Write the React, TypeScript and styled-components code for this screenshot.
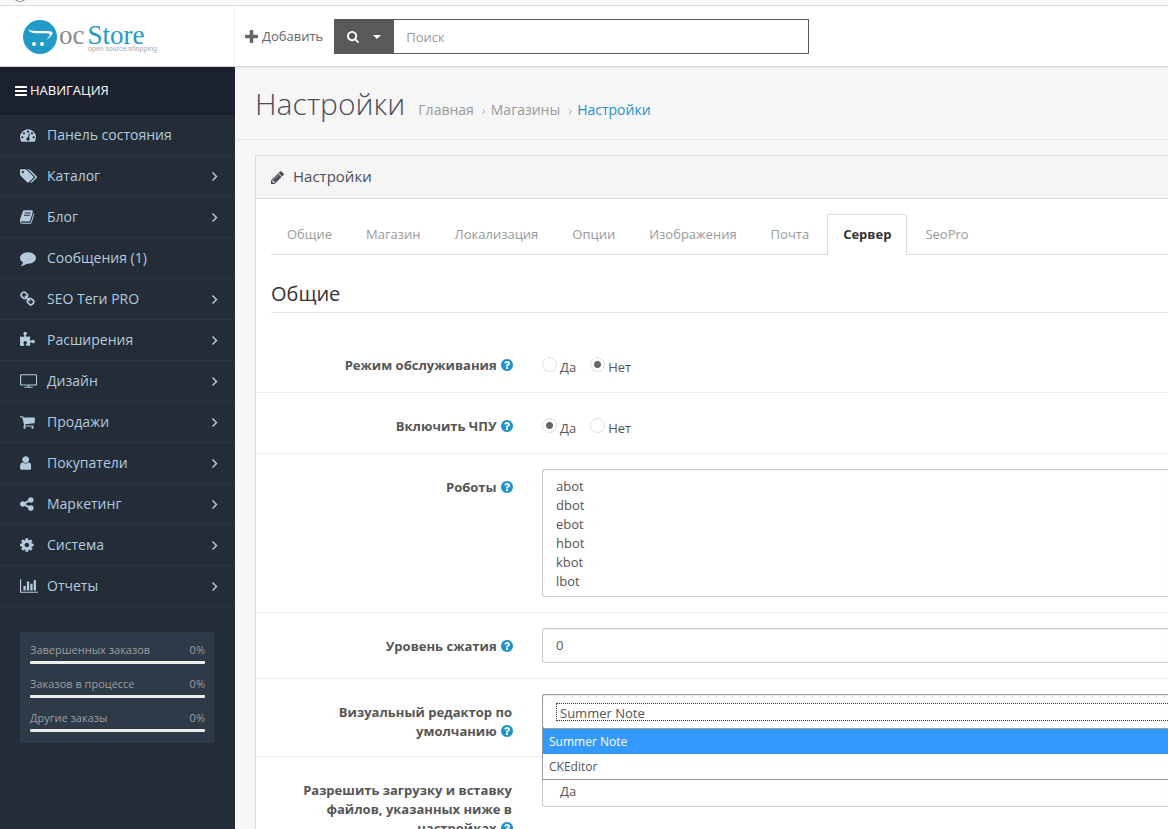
import React from "react";
import styled, { createGlobalStyle } from "styled-components";

const GlobalStyle = createGlobalStyle`
  *, *::before, *::after { box-sizing: border-box; }
  body {
    margin: 0;
    background: #f6f6f6;
    color: #555;
    font: 400 13px/19px "Open Sans", "Noto Sans", sans-serif;
  }
  a { color: inherit; text-decoration: none; }
  button, input, select, textarea { font: inherit; color: inherit; }
  ul, ol { list-style: none; margin: 0; padding: 0; }
  h1, h2, h3 { margin: 0; font-weight: 400; }
`;

/* ---------- icons ---------- */

type Glyph = { box: string; ratio: number; d: string };

const glyphs: Record<string, Glyph> = {
  bars: {
    box: "128 0 1536 1792",
    ratio: 0.857,
    d: "M1664 1344v128q0 26-19 45t-45 19h-1408q-26 0-45-19t-19-45v-128q0-26 19-45t45-19h1408q26 0 45 19t19 45zm0-512v128q0 26-19 45t-45 19h-1408q-26 0-45-19t-19-45v-128q0-26 19-45t45-19h1408q26 0 45 19t19 45zm0-512v128q0 26-19 45t-45 19h-1408q-26 0-45-19t-19-45v-128q0-26 19-45t45-19h1408q26 0 45 19t19 45z",
  },
  dashboard: {
    box: "0 0 1792 1792",
    ratio: 1,
    d: "M384 1152q0-53-37.5-90.5t-90.5-37.5-90.5 37.5-37.5 90.5 37.5 90.5 90.5 37.5 90.5-37.5 37.5-90.5zm192-448q0-53-37.5-90.5t-90.5-37.5-90.5 37.5-37.5 90.5 37.5 90.5 90.5 37.5 90.5-37.5 37.5-90.5zm428 481l101-382q6-26-7.5-48.5t-38.5-29.5-48 6.5-30 39.5l-101 382q-60 5-107 43.5t-63 98.5q-20 77 20 146t117 89 146-20 89-117q16-60-6-117t-72-91zm660-33q0-53-37.5-90.5t-90.5-37.5-90.5 37.5-37.5 90.5 37.5 90.5 90.5 37.5 90.5-37.5 37.5-90.5zm-640-640q0-53-37.5-90.5t-90.5-37.5-90.5 37.5-37.5 90.5 37.5 90.5 90.5 37.5 90.5-37.5 37.5-90.5zm448 192q0-53-37.5-90.5t-90.5-37.5-90.5 37.5-37.5 90.5 37.5 90.5 90.5 37.5 90.5-37.5 37.5-90.5zm320 448q0 261-141 483-19 29-54 29h-1402q-35 0-54-29-141-221-141-483 0-182 71-348t191-286 286-191 348-71 348 71 286 191 191 286 71 348z",
  },
  tags: {
    box: "0 0 1904 1792",
    ratio: 1.0625,
    d: "M448 448q0-53-37.5-90.5t-90.5-37.5-90.5 37.5-37.5 90.5 37.5 90.5 90.5 37.5 90.5-37.5 37.5-90.5zm1067 576q0 53-37 90l-491 492q-39 37-91 37-53 0-90-37l-715-716q-38-37-64.5-101t-26.5-117v-416q0-52 38-90t90-38h416q53 0 117 26.5t102 64.5l715 714q37 39 37 91zm384 0q0 53-37 90l-491 492q-39 37-91 37-36 0-59-14t-53-45l470-470q37-37 37-90 0-52-37-91l-715-714q-38-38-102-64.5t-117-26.5h224q53 0 117 26.5t102 64.5l715 714q37 39 37 91z",
  },
  book: {
    box: "64 0 1664 1792",
    ratio: 0.9286,
    d: "M1639 478q40 57 18 129l-275 906q-19 64-76.5 107.5t-122.5 43.5h-923q-77 0-148.5-53.5t-99.5-131.5q-24-67-2-127 0-4 3-27t4-37q1-8-3-21.5t-3-19.5q2-11 8-21t16.5-23.5 16.5-23.5q23-38 45-91.5t30-91.5q3-10 .5-30t-.5-28q3-11 17-28t17-23q21-36 42-92t25-90q1-9-2.5-32t.5-28q4-13 22-30.5t22-22.5q19-26 42.5-84.5t27.5-96.5q1-8-3-25.5t-2-26.5q2-8 9-18t18-23 17-21q8-12 16.5-30.5t15-35 16-36 19.5-32 26.5-23.5 36-11.5 47.5 5.5l-1 3q38-9 51-9h761q74 0 114 56t18 130l-274 906q-36 119-71.5 153.5t-128.5 34.5h-869q-27 0-38 15-11 16-1 43 24 70 144 70h923q29 0 56-15.5t35-41.5l300-987q7-22 5-57 38 15 59 43zm-1064 2q-4 13 2 22.5t20 9.5h608q13 0 25.5-9.5t16.5-22.5l21-64q4-13-2-22.5t-20-9.5h-608q-13 0-25.5 9.5t-16.5 22.5zm-83 256q-4 13 2 22.5t20 9.5h608q13 0 25.5-9.5t16.5-22.5l21-64q4-13-2-22.5t-20-9.5h-608q-13 0-25.5 9.5t-16.5 22.5z",
  },
  comment: {
    box: "0 0 1792 1792",
    ratio: 1,
    d: "M1792 896q0 174-120 321.5t-326 233-450 85.5q-70 0-145-8-198 175-460 242-49 14-114 22-17 2-30.5-9t-17.5-29v-1q-3-4-.5-12t2-10 4.5-9.5l6-9 7-8.5 8-9q7-8 31-34.5t34.5-38 31-39.5 32.5-51 27-59 26-76q-157-89-247.5-220t-90.5-281q0-130 71-248.5t191-204.5 286-136.5 348-50.5q244 0 450 85.5t326 233 120 321.5z",
  },
  chain: {
    box: "64 0 1664 1792",
    ratio: 0.9286,
    d: "M1520 1216q0-40-28-68l-208-208q-28-28-68-28-42 0-72 32 3 3 19 18.5t21.5 21.5 15 19 13 25.5 3.5 27.5q0 40-28 68t-68 28q-15 0-27.5-3.5t-25.5-13-19-15-21.5-21.5-18.5-19q-33 31-33 73 0 40 28 68l206 207q27 27 68 27 40 0 68-26l147-146q28-28 28-67zm-703-705q0-40-28-68l-206-207q-28-28-68-28-39 0-68 27l-147 146q-28 28-28 67 0 40 28 68l208 208q27 27 68 27 42 0 72-31-3-3-19-18.5t-21.5-21.5-15-19-13-25.5-3.5-27.5q0-40 28-68t68-28q15 0 27.5 3.5t25.5 13 19 15 21.5 21.5 18.5 19q33-31 33-73zm895 705q0 120-85 203l-147 146q-83 83-203 83-121 0-204-85l-206-207q-83-83-83-203 0-123 88-209l-88-88q-86 88-208 88-120 0-204-84l-208-208q-84-84-84-204t85-203l147-146q83-83 203-83 121 0 204 85l206 207q83 83 83 203 0 123-88 209l88 88q86-88 208-88 120 0 204 84l208 208q84 84 84 204z",
  },
  puzzle: {
    box: "90 0 1664 1792",
    ratio: 0.9286,
    d: "M1755 1083q0 81-44.5 135t-123.5 54q-41 0-77.5-17.5t-59-38-56.5-38-71-17.5q-110 0-110 124 0 39 16 115t15 115v5q-22 0-33 1-34 3-97.5 11.5t-115.5 13.5-98 5q-61 0-103-26.5t-42-83.5q0-37 17.5-71t38-56.5 38-59 17.5-77.5q0-79-54-123.5t-135-44.5q-84 0-143 45.5t-59 127.5q0 43 15 83t33.5 64.5 33.5 53 15 50.5q0 45-46 89-37 35-117 35-95 0-245-24-9-2-27.5-4t-27.5-4l-13-2q-1 0-3-1-2 0-2-1v-1024q2 1 17.5 3.5t34 5 21.5 3.5q150 24 245 24 80 0 117-35 46-44 46-89 0-22-15-50.5t-33.5-53-33.5-64.5-15-83q0-82 59-127.5t144-45.5q80 0 134 44.5t54 123.5q0 41-17.5 77.5t-38 59-38 56.5-17.5 71q0 57 42 83.5t103 26.5q64 0 180-15t163-17v2q-1 2-3.5 17.5t-5 34-3.5 21.5q-24 150-24 245 0 80 35 117 44 46 89 46 22 0 50.5-15t53-33.5 64.5-33.5 83-15q82 0 127.5 59t45.5 143z",
  },
  television: {
    box: "-64 0 1920 1792",
    ratio: 1.0714,
    d: "M1728 1248v-960q0-13-9.5-22.5t-22.5-9.5h-1600q-13 0-22.5 9.5t-9.5 22.5v960q0 13 9.5 22.5t22.5 9.5h1600q13 0 22.5-9.5t9.5-22.5zm128-960v960q0 66-47 113t-113 47h-736v128h352q14 0 23 9t9 23v64q0 14-9 23t-23 9h-832q-14 0-23-9t-9-23v-64q0-14 9-23t23-9h352v-128h-736q-66 0-113-47t-47-113v-960q0-66 47-113t113-47h1600q66 0 113 47t47 113z",
  },
  cart: {
    box: "64 0 1664 1792",
    ratio: 0.9286,
    d: "M704 1536q0 52-38 90t-90 38-90-38-38-90 38-90 90-38 90 38 38 90zm896 0q0 52-38 90t-90 38-90-38-38-90 38-90 90-38 90 38 38 90zm128-1088v512q0 24-16.5 42.5t-40.5 21.5l-1044 122q13 60 13 70 0 16-24 64h920q26 0 45 19t19 45-19 45-45 19h-1024q-26 0-45-19t-19-45q0-11 8-31.5t16-36 21.5-40 15.5-29.5l-177-823h-204q-26 0-45-19t-19-45 19-45 45-19h256q16 0 28.5 6.5t19.5 15.5 13 24.5 8 26 5.5 29.5 4.5 26h1201q26 0 45 19t19 45z",
  },
  user: {
    box: "256 0 1280 1792",
    ratio: 0.7143,
    d: "M1536 1399q0 109-62.5 187t-150.5 78h-854q-88 0-150.5-78t-62.5-187q0-85 8.5-160.5t31.5-152 58.5-131 94-89 134.5-34.5q131 128 313 128t313-128q76 0 134.5 34.5t94 89 58.5 131 31.5 152 8.5 160.5zm-256-887q0 159-112.5 271.5t-271.5 112.5-271.5-112.5-112.5-271.5 112.5-271.5 271.5-112.5 271.5 112.5 112.5 271.5z",
  },
  share: {
    box: "128 0 1536 1792",
    ratio: 0.8571,
    d: "M1344 1024q133 0 226.5 93.5t93.5 226.5-93.5 226.5-226.5 93.5-226.5-93.5-93.5-226.5q0-12 2-34l-360-180q-92 86-218 86-133 0-226.5-93.5t-93.5-226.5 93.5-226.5 226.5-93.5q126 0 218 86l360-180q-2-22-2-34 0-133 93.5-226.5t226.5-93.5 226.5 93.5 93.5 226.5-93.5 226.5-226.5 93.5q-126 0-218-86l-360 180q2 22 2 34t-2 34l360 180q92-86 218-86z",
  },
  cog: {
    box: "128 0 1536 1792",
    ratio: 0.8571,
    d: "M1152 896q0-106-75-181t-181-75-181 75-75 181 75 181 181 75 181-75 75-181zm512-109v222q0 12-8 23t-20 13l-185 28q-19 54-39 91 35 50 107 138 10 12 10 25t-9 23q-27 37-99 108t-94 71q-12 0-26-9l-138-108q-44 23-91 38-16 136-29 186-7 28-36 28h-222q-14 0-24.5-8.5t-11.5-21.5l-28-184q-49-16-90-37l-141 107q-10 9-25 9-14 0-25-11-126-114-165-168-7-10-7-23 0-12 8-23 15-21 51-66.5t54-70.5q-27-50-41-99l-183-27q-13-2-21-12.5t-8-23.5v-222q0-12 8-23t19-13l186-28q14-46 39-92-40-57-107-138-10-12-10-24 0-10 9-23 26-36 98.5-107.5t94.5-71.5q13 0 26 10l138 107q44-23 91-38 16-136 29-186 7-28 36-28h222q14 0 24.5 8.5t11.5 21.5l28 184q49 16 90 37l142-107q9-9 24-9 13 0 25 10 129 119 165 170 7 8 7 22 0 12-8 23-15 21-51 66.5t-54 70.5q26 50 41 98l183 28q13 2 21 12.5t8 23.5z",
  },
  chart: {
    box: "0 0 2048 1792",
    ratio: 1.1429,
    d: "M640 896v512h-256v-512h256zm384-512v1024h-256v-1024h256zm1024 1152v128h-2048v-1536h128v1408h1920zm-640-896v768h-256v-768h256zm384-384v1152h-256v-1152h256z",
  },
  angle: {
    box: "0 0 6 9",
    ratio: 0.6667,
    d: "M0 1L1 0L5.500 4.500L1 9L0 8L3.500 4.500z",
  },
  plus: {
    box: "192 128 1408 1408",
    ratio: 1,
    d: "M1600 736v192q0 40-28 68t-68 28h-416v416q0 40-28 68t-68 28h-192q-40 0-68-28t-28-68v-416h-416q-40 0-68-28t-28-68v-192q0-40 28-68t68-28h416v-416q0-40 28-68t68-28h192q40 0 68 28t28 68v416h416q40 0 68 28t28 68z",
  },
  search: {
    box: "64 128 1664 1664",
    ratio: 1,
    d: "M1216 832q0-185-131.5-316.5t-316.5-131.5-316.5 131.5-131.5 316.5 131.5 316.5 316.5 131.5 316.5-131.5 131.5-316.5zm512 832q0 52-38 90t-90 38q-54 0-90-38l-343-342q-179 124-399 124-143 0-273.5-55.5t-225-150-150-225-55.5-273.5 55.5-273.5 150-225 225-150 273.5-55.5 273.5 55.5 225 150 150 225 55.5 273.5q0 220-124 399l343 343q37 37 37 90z",
  },
  caret: { box: "0 0 8 4", ratio: 2, d: "M0 0h8l-4 4z" },
  pencil: {
    box: "128 128 1536 1536",
    ratio: 1,
    d: "M491 1536l91-91-235-235-91 91v107h128v128h107zm523-928q0-22-22-22-10 0-17 7l-542 542q-7 7-7 17 0 22 22 22 10 0 17-7l542-542q7-7 7-17zm-54-192l416 416-832 832h-416v-416zm683 96q0 53-37 90l-166 166-416-416 166-165q36-38 90-38 53 0 91 38l235 234q37 39 37 91z",
  },
  question: {
    box: "128 128 1536 1536",
    ratio: 1,
    d: "M1024 1376v-192q0-14-9-23t-23-9h-192q-14 0-23 9t-9 23v192q0 14 9 23t23 9h192q14 0 23-9t9-23zm256-672q0-88-55.5-163t-138.5-116-170-41q-243 0-371 213-15 24 8 42l132 100q7 6 19 6 16 0 25-12 53-68 86-92 34-24 86-24 48 0 85.5 26t37.5 59q0 38-20 61t-68 45q-63 28-115.5 86.5t-52.5 125.5v36q0 14 9 23t23 9h192q14 0 23-9t9-23q0-19 21.5-49.5t54.5-49.5q32-18 49-28.5t46-35 44.5-48 28-60.5 12.5-81zm384 192q0 209-103 385.5t-279.5 279.5-385.5 103-385.5-103-279.5-279.5-103-385.5 103-385.5 279.5-279.5 385.5-103 385.5 103 279.5 279.5 103 385.5z",
  },
};

function Icon({ name, size }: { name: string; size: number }) {
  const g = glyphs[name];
  return (
    <svg width={size * g.ratio} height={size} viewBox={g.box} fill="currentColor" aria-hidden="true">
      <path d={g.d} />
    </svg>
  );
}

/* ---------- shell ---------- */

const Page = styled.div`
  display: flex;
  flex-direction: column;
  height: 100vh;
  overflow: hidden;
`;

const TopStrip = styled.div`
  flex: none;
  height: 6px;
  padding-left: 12px;
  background: #f9f9f9;
  border-bottom: 1px solid #dcdcdc;
  svg { display: block; }
`;

const Header = styled.header`
  flex: none;
  display: flex;
  height: 61px;
  background: #fff;
  border-bottom: 1px solid #d8d8d8;
  box-shadow: 0 1px 2px rgba(0, 0, 0, 0.08);
  z-index: 1;
`;

const Brand = styled.a`
  display: flex;
  flex: none;
  width: 235px;
  padding: 13px 0 0 22px;
  border-right: 1px solid #eee;
`;

const BrandText = styled.span`
  display: flex;
  flex-direction: column;
  padding-left: 2px;
  color: #8a8a8a;
`;

const BrandName = styled.span`
  display: flex;
  gap: 3px;
  padding-top: 6px;
  font: 27px/20px "Liberation Serif", serif;
  b { font-weight: 400; color: #229ac8; }
`;

const BrandNote = styled.span`
  padding-left: 29px;
  font: 7px/8px Roboto, sans-serif;
  color: #aaa;
`;

const AddButton = styled.button`
  display: flex;
  align-items: center;
  gap: 4px;
  padding: 0 11px 0 10px;
  border: 0;
  background: none;
  color: #666;
`;

const Search = styled.form`
  display: flex;
  align-self: flex-start;
  flex: 0 1 475px;
  height: 35px;
  margin-top: 13px;
`;

const SearchButton = styled.button`
  display: flex;
  align-items: center;
  gap: 14px;
  width: 60px;
  padding: 0 0 0 13px;
  border: 0;
  background: #595959;
  color: #fff;
`;

const SearchInput = styled.input`
  flex: 1;
  min-width: 0;
  padding: 2px 12px 0;
  border: 1px solid #595959;
  border-left: 0;
  background: #fff;
  &::placeholder { color: #999; opacity: 1; }
`;

const Body = styled.div`
  flex: 1;
  display: flex;
  min-height: 0;
`;

/* ---------- sidebar ---------- */

const Sidebar = styled.aside`
  flex: none;
  width: 235px;
  background: #242c38;
`;

const NavTitle = styled.div`
  display: flex;
  align-items: center;
  gap: 3px;
  height: 48px;
  padding: 0 0 1px 15px;
  background: #1b212e;
  color: #fff;
`;

const NavLink = styled.a`
  display: flex;
  align-items: center;
  height: 41px;
  padding: 0 17px 0 20px;
  border-bottom: 1px solid #2c3640;
  color: #b3cbdd;
  font-size: 14px;
`;

const NavIcon = styled.span`
  display: flex;
  width: 27px;
  padding-bottom: 1px;
`;

const NavText = styled.span`
  flex: 1;
  padding-bottom: 2px;
`;

const Stats = styled.ul`
  margin: 25px 20px 0;
  padding: 8px 10px 11px;
  border-radius: 2px;
  background: #2e3a47;
  color: #9d9d9d;
  font-size: 11px;
`;

const Stat = styled.li`
  & + & { margin-top: 10px; }
`;

const StatLine = styled.div`
  display: flex;
  justify-content: space-between;
  line-height: 20px;
`;

const Track = styled.div`
  height: 3px;
  margin-top: 1px;
  border-radius: 1px;
  background: #eee;
`;

/* ---------- content ---------- */

const Main = styled.main`
  flex: 1;
  min-width: 0;
  overflow: hidden;
`;

const PageHead = styled.div`
  display: flex;
  align-items: baseline;
  gap: 13px;
  height: 73px;
  padding: 17px 20px 0;
  border-bottom: 1px solid #e8e8e8;
`;

const Title = styled.h1`
  font-size: 30px;
  font-weight: 300;
  line-height: 40px;
  color: #4c4d5a;
`;

const Crumbs = styled.ol`
  display: flex;
  color: #999;
  font-size: 14px;
  li + li::before { content: "›"; padding: 0 5px 0 8px; color: #bbb; font-size: 13px; }
  li:last-child a { color: #1e91cf; }
`;

const Panel = styled.section`
  margin: 15px 0 0 20px;
  border: 1px solid #dcdcdc;
  border-right: 0;
  background: #fff;
`;

const PanelHead = styled.div`
  display: flex;
  align-items: center;
  gap: 9px;
  height: 43px;
  padding-left: 15px;
  border-bottom: 1px solid #dcdcdc;
  background: #f5f5f5;
  color: #4c4d5a;
  h2 { padding-bottom: 2px; font-size: 15px; line-height: 20px; }
`;

const Tabs = styled.nav`
  display: flex;
  gap: 2px;
  margin: 15px 0 0 15px;
  border-bottom: 1px solid #ddd;
`;

const Tab = styled.a<{ $active?: boolean }>`
  height: 41px;
  margin-bottom: -1px;
  padding: 10px 15px;
  border: 1px solid ${(p) => (p.$active ? "#ddd" : "transparent")};
  border-bottom-color: ${(p) => (p.$active ? "#fff" : "transparent")};
  border-radius: 2px 2px 0 0;
  background: ${(p) => (p.$active ? "#fff" : "transparent")};
  color: ${(p) => (p.$active ? "#333" : "#999")};
  font-weight: ${(p) => (p.$active ? 700 : 400)};
`;

const SectionTitle = styled.h3`
  height: 58px;
  margin: 0 0 19px 15px;
  padding-top: 24px;
  border-bottom: 1px solid #e5e5e5;
  color: #333;
  font-size: 20px;
  line-height: 30px;
`;

const Row = styled.div`
  display: grid;
  grid-template-columns: 271px 1fr;
  padding: 15px 0;
  & + & { border-top: 1px solid #ededed; }
`;

const Label = styled.label`
  padding: 9px 15px 0 0;
  text-align: right;
  font-weight: 700;
  svg {
    margin: 0 -1px -1px 1px;
    color: #1e91cf;
  }
`;

const Field = styled.div`
  position: relative;
  padding-left: 15px;
`;

const Radios = styled.div`
  display: flex;
  gap: 14px;
  height: 30px;
  padding-top: 10px;
`;

const RadioLabel = styled.label`
  display: flex;
  gap: 3px;
  line-height: 20px;
`;

const Radio = styled.input`
  appearance: none;
  width: 15px;
  height: 15px;
  margin: 0;
  border: 1px solid #ddd;
  border-radius: 50%;
  background: #fff;
  &:checked { background: radial-gradient(circle, #666 0 3px, #fff 4px); }
`;

const TextArea = styled.textarea`
  display: block;
  width: 100%;
  height: 128px;
  padding: 7px 13px;
  border: 1px solid #ccc;
  border-right: 0;
  border-radius: 3px 0 0 3px;
  box-shadow: inset 0 1px 1px rgba(0, 0, 0, 0.08);
  resize: none;
  overflow: hidden;
`;

const TextInput = styled.input`
  display: block;
  width: 100%;
  height: 35px;
  padding: 0 13px 2px;
  border: 1px solid #ccc;
  border-right: 0;
  border-radius: 3px 0 0 3px;
  box-shadow: inset 0 1px 1px rgba(0, 0, 0, 0.08);
`;

const SelectBox = styled.div<{ $open?: boolean }>`
  height: 35px;
  padding: 8px 0 0 13px;
  border: 1px solid ${(p) => (p.$open ? "#999" : "#ccc")};
  border-right: 0;
  border-radius: 3px 0 0 3px;
  background: #fff;
  box-shadow: inset 0 1px 1px rgba(0, 0, 0, 0.08);
  select {
    display: block;
    appearance: none;
    width: 100%;
    height: 18px;
    padding: 0 3px;
    border: 1px dotted ${(p) => (p.$open ? "#333" : "transparent")};
    border-right: 0;
    background: none;
    line-height: 18px;
    outline: 0;
  }
`;

const Options = styled.ul`
  position: absolute;
  z-index: 2;
  top: 34px;
  left: 15px;
  right: 0;
  border: solid #999;
  border-width: 1px 0 1px 1px;
  background: #fff;
  font-size: 12px;
  line-height: 25px;
`;

const Option = styled.li<{ $active?: boolean }>`
  padding-left: 6px;
  background: ${(p) => (p.$active ? "#3399ff" : "#fff")};
  color: ${(p) => (p.$active ? "#fff" : "#555")};
`;

/* ---------- data ---------- */

const nav: [string, string, boolean][] = [
  ["dashboard", "Панель состояния", false],
  ["tags", "Каталог", true],
  ["book", "Блог", true],
  ["comment", "Сообщения (1)", false],
  ["chain", "SEO Теги PRO", true],
  ["puzzle", "Расширения", true],
  ["television", "Дизайн", true],
  ["cart", "Продажи", true],
  ["user", "Покупатели", true],
  ["share", "Маркетинг", true],
  ["cog", "Система", true],
  ["chart", "Отчеты", true],
];

const stats = ["Завершенных заказов", "Заказов в процессе", "Другие заказы"];
const tabs = ["Общие", "Магазин", "Локализация", "Опции", "Изображения", "Почта", "Сервер", "SeoPro"];
const robots = "abot\ndbot\nebot\nhbot\nkbot\nlbot";

function Caption({ id, children }: { id?: string; children: string }) {
  return (
    <Label htmlFor={id} as={id ? "label" : "div"}>
      {children} <Icon name="question" size={12} />
    </Label>
  );
}

function YesNo({ name, label, value }: { name: string; label: string; value: "yes" | "no" }) {
  return (
    <Radios role="radiogroup" aria-label={label}>
      <RadioLabel>
        <Radio type="radio" name={name} defaultChecked={value === "yes"} />
        Да
      </RadioLabel>
      <RadioLabel>
        <Radio type="radio" name={name} defaultChecked={value === "no"} />
        Нет
      </RadioLabel>
    </Radios>
  );
}

export default function App() {
  return (
    <>
      <GlobalStyle />
      <Page>
        <TopStrip>
          <svg width="16" height="3" viewBox="0 0 16 3" aria-hidden="true">
            <circle cx="8" cy="-6" r="7.5" fill="#fff" stroke="#888" />
          </svg>
        </TopStrip>
        <Header>
          <Brand href="#">
            <svg width="35" height="35" viewBox="0 0 35 35" aria-hidden="true">
              <circle cx="18" cy="18" r="17" fill="#229ac8" />
              <path
                d="M6 10.500C8 12 12 12 18 12C24 12 29 12 30.500 13.200C31 15 28 18.500 24.500 21C26 18.500 28.500 16 28 15C26 14 20 14.500 15 14.200C10 14 7 13 6 10.500z"
                fill="#fff"
              />
              <circle cx="12" cy="25" r="2" fill="#fff" />
              <circle cx="20" cy="25" r="2" fill="#fff" />
            </svg>
            <BrandText>
              <BrandName>
                <span>oc</span>
                <b>Store</b>
              </BrandName>
              <BrandNote>open source shopping</BrandNote>
            </BrandText>
          </Brand>
          <AddButton type="button">
            <Icon name="plus" size={13} />
            Добавить
          </AddButton>
          <Search>
            <SearchButton type="button" aria-label="Поиск">
              <Icon name="search" size={12} />
              <Icon name="caret" size={4} />
            </SearchButton>
            <SearchInput type="text" placeholder="Поиск" aria-label="Поиск" />
          </Search>
        </Header>
        <Body>
          <Sidebar>
            <NavTitle>
              <Icon name="bars" size={14} />
              НАВИГАЦИЯ
            </NavTitle>
            <nav>
              {nav.map(([icon, text, more]) => (
                <NavLink href="#" key={text}>
                  <NavIcon>
                    <Icon name={icon} size={16} />
                  </NavIcon>
                  <NavText>{text}</NavText>
                  {more && <Icon name="angle" size={9} />}
                </NavLink>
              ))}
            </nav>
            <Stats>
              {stats.map((s) => (
                <Stat key={s}>
                  <StatLine>
                    <span>{s}</span>
                    <span>0%</span>
                  </StatLine>
                  <Track />
                </Stat>
              ))}
            </Stats>
          </Sidebar>
          <Main>
            <PageHead>
              <Title>Настройки</Title>
              <Crumbs>
                <li><a href="#">Главная</a></li>
                <li><a href="#">Магазины</a></li>
                <li><a href="#">Настройки</a></li>
              </Crumbs>
            </PageHead>
            <Panel>
              <PanelHead>
                <Icon name="pencil" size={13} />
                <h2>Настройки</h2>
              </PanelHead>
              <Tabs>
                {tabs.map((t) => (
                  <Tab href="#" key={t} $active={t === "Сервер"}>
                    {t}
                  </Tab>
                ))}
              </Tabs>
              <SectionTitle>Общие</SectionTitle>
              <Row>
                <Caption>Режим обслуживания</Caption>
                <Field>
                  <YesNo name="maintenance" label="Режим обслуживания" value="no" />
                </Field>
              </Row>
              <Row>
                <Caption>Включить ЧПУ</Caption>
                <Field>
                  <YesNo name="seo" label="Включить ЧПУ" value="yes" />
                </Field>
              </Row>
              <Row>
                <Caption id="robots">Роботы</Caption>
                <Field>
                  <TextArea id="robots" defaultValue={robots} />
                </Field>
              </Row>
              <Row>
                <Caption id="compression">Уровень сжатия</Caption>
                <Field>
                  <TextInput id="compression" type="text" defaultValue="0" />
                </Field>
              </Row>
              <Row>
                <Caption id="editor">Визуальный редактор по умолчанию</Caption>
                <Field>
                  <SelectBox $open>
                    <select id="editor" defaultValue="Summer Note">
                      <option>Summer Note</option>
                      <option>CKEditor</option>
                    </select>
                  </SelectBox>
                  <Options>
                    <Option $active>Summer Note</Option>
                    <Option>CKEditor</Option>
                  </Options>
                </Field>
              </Row>
              <Row>
                <Caption id="upload">Разрешить загрузку и вставку файлов, указанных ниже в настройках</Caption>
                <Field>
                  <SelectBox>
                    <select id="upload" defaultValue="Да">
                      <option>Да</option>
                      <option>Нет</option>
                    </select>
                  </SelectBox>
                </Field>
              </Row>
            </Panel>
          </Main>
        </Body>
      </Page>
    </>
  );
}
